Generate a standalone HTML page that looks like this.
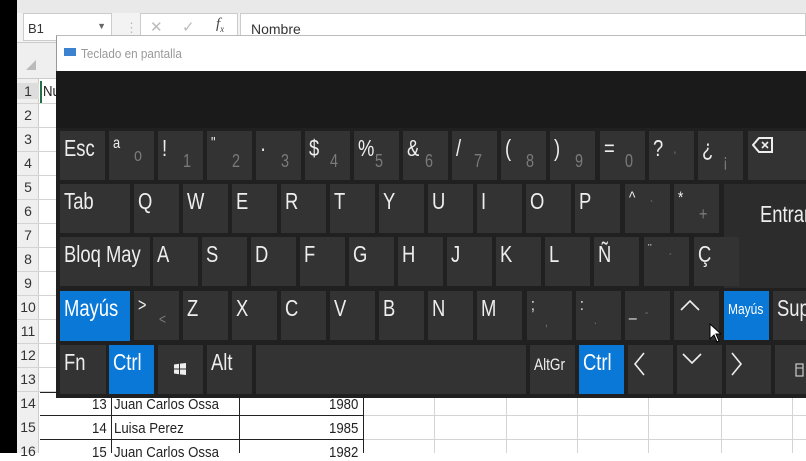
<!DOCTYPE html>
<html><head><meta charset="utf-8"><style>
*{margin:0;padding:0;box-sizing:border-box}
body{width:806px;height:453px;overflow:hidden;position:relative;background:#fff;font-family:"Liberation Sans",sans-serif}
.a{position:absolute}
.k{position:absolute;background:#333;color:#eee;height:49px;width:45px;overflow:hidden}
.b{background:#0a78d7;color:#fff}
.l{position:absolute;left:4px;top:4px;font-size:23px;transform:scaleX(.8);transform-origin:left top;white-space:nowrap}
.s{position:absolute;left:25px;top:20px;font-size:18px;color:#7a7a7a;transform:scaleX(.8);transform-origin:left top}
.rn{position:absolute;left:17px;width:22px;font-size:14px;color:#333;text-align:center}
.hl{position:absolute;height:1px;background:#d4d4d4}
.vl{position:absolute;width:1px;background:#d4d4d4}
.c{position:absolute;font-size:15px;color:#222;transform:scaleX(.88);transform-origin:left top;white-space:nowrap}
</style></head><body>
<div class="a" style="left:0;top:0;width:17px;height:453px;background:#000"></div>
<div class="a" style="left:17px;top:0;width:789px;height:13px;background:#e9e9e9"></div>
<div class="a" style="left:17px;top:13px;width:789px;height:30px;background:#f3f3f3;border-bottom:1px solid #ccc"></div>
<div class="a" style="left:23px;top:13px;width:89px;height:28px;background:#fff;border:1px solid #ccc;font-size:13px;color:#333;padding:7px 4px">B1<span style="position:absolute;right:5px;top:7px;font-size:9px;color:#666">▼</span></div>
<div class="a" style="left:125px;top:20px;color:#bbb;font-size:13px">⋮</div>
<div class="a" style="left:140px;top:13px;width:98px;height:28px;background:#fff;border:1px solid #ccc"></div>
<div class="a" style="left:150px;top:18px;color:#bbb;font-size:15px">✕</div>
<div class="a" style="left:182px;top:18px;color:#bbb;font-size:15px">✓</div>
<div class="a" style="left:216px;top:16px;color:#444;font-size:15px;font-style:italic;font-family:'Liberation Serif',serif">f<sub style="font-size:9px">x</sub></div>
<div class="a" style="left:240px;top:13px;width:566px;height:28px;background:#fff;border:1px solid #ccc;font-size:14px;color:#333;padding:7px 10px">Nombre</div>
<div class="a" style="left:17px;top:43px;width:22px;height:410px;background:#efefef;border-right:1px solid #ccc"></div>
<div class="a" style="left:17px;top:43px;width:789px;height:36px;background:#efefef;border-bottom:1px solid #ccc"></div>
<div class="a" style="left:26px;top:60px;width:0;height:0;border-left:10px solid transparent;border-bottom:10px solid #bbb"></div>
<div class="rn" style="top:83px;background:#ddd">1</div>
<div class="rn" style="top:107px">2</div><div class="rn" style="top:131px">3</div><div class="rn" style="top:155px">4</div><div class="rn" style="top:179px">5</div><div class="rn" style="top:203px">6</div><div class="rn" style="top:227px">7</div><div class="rn" style="top:251px">8</div><div class="rn" style="top:275px">9</div><div class="rn" style="top:299px">10</div><div class="rn" style="top:323px">11</div><div class="rn" style="top:347px">12</div><div class="rn" style="top:371px">13</div><div class="rn" style="top:395px">14</div><div class="rn" style="top:419px">15</div><div class="rn" style="top:443px">16</div>
<div class="hl" style="left:17px;top:103px;width:40px"></div><div class="hl" style="left:17px;top:127px;width:40px"></div><div class="hl" style="left:17px;top:151px;width:40px"></div><div class="hl" style="left:17px;top:175px;width:40px"></div><div class="hl" style="left:17px;top:199px;width:40px"></div><div class="hl" style="left:17px;top:223px;width:40px"></div><div class="hl" style="left:17px;top:247px;width:40px"></div><div class="hl" style="left:17px;top:271px;width:40px"></div><div class="hl" style="left:17px;top:295px;width:40px"></div><div class="hl" style="left:17px;top:319px;width:40px"></div><div class="hl" style="left:17px;top:343px;width:40px"></div><div class="hl" style="left:17px;top:367px;width:40px"></div><div class="hl" style="left:17px;top:391px;width:40px"></div>
<div class="a" style="left:40px;top:81px;width:2px;height:22px;background:#217346"></div>
<div class="c" style="left:43px;top:83px">Nu</div>
<div class="hl" style="left:363px;top:415px;width:443px"></div><div class="hl" style="left:363px;top:439px;width:443px"></div>
<div class="vl" style="left:434px;top:397px;height:56px"></div><div class="vl" style="left:506px;top:397px;height:56px"></div><div class="vl" style="left:577px;top:397px;height:56px"></div><div class="vl" style="left:648px;top:397px;height:56px"></div><div class="vl" style="left:721px;top:397px;height:56px"></div><div class="vl" style="left:792px;top:397px;height:56px"></div>
<div class="a" style="left:40px;top:392px;width:323px;height:1px;background:#222"></div>
<div class="a" style="left:40px;top:415px;width:323px;height:1px;background:#222"></div>
<div class="a" style="left:40px;top:439px;width:323px;height:1px;background:#222"></div>
<div class="a" style="left:111px;top:392px;width:1px;height:61px;background:#222"></div>
<div class="a" style="left:239px;top:392px;width:1px;height:61px;background:#222"></div>
<div class="a" style="left:363px;top:392px;width:1px;height:61px;background:#222"></div>
<div class="c" style="left:92px;top:396px">13</div><div class="c" style="left:114px;top:396px">Juan Carlos Ossa</div><div class="c" style="left:329px;top:396px">1980</div>
<div class="c" style="left:92px;top:420px">14</div><div class="c" style="left:114px;top:420px">Luisa Perez</div><div class="c" style="left:329px;top:420px">1985</div>
<div class="c" style="left:92px;top:444px">15</div><div class="c" style="left:114px;top:444px">Juan Carlos Ossa</div><div class="c" style="left:329px;top:444px">1982</div>
<div class="a" style="left:56px;top:35px;width:750px;height:36px;background:#fff;border-left:1px solid #999;border-top:1px solid #bbb"></div>
<div class="a" style="left:64px;top:48px;width:12px;height:8px;background:#3b82d0"></div>
<div class="a" style="left:81px;top:46px;font-size:13px;color:#999;transform:scaleX(.9);transform-origin:left top">Teclado en pantalla</div>
<div class="a" style="left:56px;top:71px;width:750px;height:59px;background:#1a1a1a"></div>
<div class="a" style="left:56px;top:128px;width:750px;height:270px;background:#202020"></div>
<div class="k" style="left:60px;top:131px"><span class="l">Esc</span></div>
<div class="k" style="left:109px;top:131px"><span class="l" style="font-size:16px">a</span><span class="s" style="top:14px">o</span></div>
<div class="k" style="left:158px;top:131px"><span class="l">!</span><span class="s">1</span></div>
<div class="k" style="left:207px;top:131px"><span class="l" style="font-size:16px">"</span><span class="s">2</span></div>
<div class="k" style="left:256px;top:131px"><span class="l">·</span><span class="s">3</span></div>
<div class="k" style="left:305px;top:131px"><span class="l">$</span><span class="s">4</span></div>
<div class="k" style="left:354px;top:131px"><span class="l">%</span><span class="s" style="left:21px">5</span></div>
<div class="k" style="left:403px;top:131px"><span class="l">&amp;</span><span class="s" style="left:22px">6</span></div>
<div class="k" style="left:452px;top:131px"><span class="l">/</span><span class="s" style="left:22px">7</span></div>
<div class="k" style="left:501px;top:131px"><span class="l">(</span><span class="s">8</span></div>
<div class="k" style="left:550px;top:131px"><span class="l">)</span><span class="s">9</span></div>
<div class="k" style="left:600px;top:131px"><span class="l">=</span><span class="s">0</span></div>
<div class="k" style="left:649px;top:131px"><span class="l">?</span><span class="s" style="font-size:12px;top:18px">'</span></div>
<div class="k" style="left:698px;top:131px"><span class="l">¿</span><span class="s">¡</span></div>
<div class="k" style="left:748px;top:131px;width:58px"><svg class="a" style="left:4px;top:6px" width="22" height="16" viewBox="0 0 22 16"><path d="M7 1H20V15H7L1 8Z" fill="none" stroke="#eee" stroke-width="2"/><path d="M10 5L16 11M16 5L10 11" stroke="#eee" stroke-width="1.6"/></svg></div>
<div class="k" style="left:60px;top:184px;width:70px"><span class="l">Tab</span></div>
<div class="k" style="left:134px;top:184px"><span class="l">Q</span></div>
<div class="k" style="left:183px;top:184px"><span class="l">W</span></div>
<div class="k" style="left:232px;top:184px"><span class="l">E</span></div>
<div class="k" style="left:281px;top:184px"><span class="l">R</span></div>
<div class="k" style="left:330px;top:184px"><span class="l">T</span></div>
<div class="k" style="left:379px;top:184px"><span class="l">Y</span></div>
<div class="k" style="left:428px;top:184px"><span class="l">U</span></div>
<div class="k" style="left:477px;top:184px"><span class="l">I</span></div>
<div class="k" style="left:526px;top:184px"><span class="l">O</span></div>
<div class="k" style="left:575px;top:184px"><span class="l">P</span></div>
<div class="k" style="left:625px;top:184px"><span class="l" style="font-size:17px">^</span><span class="s" style="font-size:12px;top:14px">`</span></div>
<div class="k" style="left:674px;top:184px"><span class="l" style="font-size:17px">*</span><span class="s">+</span></div>
<div class="k" style="left:724px;top:184px;width:82px;height:104px;background:#2c2c2c"><span class="l" style="left:36px;top:17px">Entrar</span></div>
<div class="k" style="left:60px;top:237px;width:90px"><span class="l">Bloq May</span></div>
<div class="k" style="left:153px;top:237px"><span class="l">A</span></div>
<div class="k" style="left:202px;top:237px"><span class="l">S</span></div>
<div class="k" style="left:251px;top:237px"><span class="l">D</span></div>
<div class="k" style="left:300px;top:237px"><span class="l">F</span></div>
<div class="k" style="left:349px;top:237px"><span class="l">G</span></div>
<div class="k" style="left:398px;top:237px"><span class="l">H</span></div>
<div class="k" style="left:447px;top:237px"><span class="l">J</span></div>
<div class="k" style="left:496px;top:237px"><span class="l">K</span></div>
<div class="k" style="left:545px;top:237px"><span class="l">L</span></div>
<div class="k" style="left:594px;top:237px"><span class="l">Ñ</span></div>
<div class="k" style="left:644px;top:237px"><span class="l" style="font-size:14px">¨</span><span class="s" style="font-size:12px;top:14px">´</span></div>
<div class="k" style="left:694px;top:237px"><span class="l">Ç</span></div>
<div class="k b" style="left:60px;top:291px;width:70px;height:50px"><span class="l">Mayús</span></div>
<div class="k" style="left:134px;top:291px"><span class="l" style="font-size:18px">&gt;</span><span class="s" style="font-size:15px">&lt;</span></div>
<div class="k" style="left:183px;top:291px"><span class="l">Z</span></div>
<div class="k" style="left:232px;top:291px"><span class="l">X</span></div>
<div class="k" style="left:281px;top:291px"><span class="l">C</span></div>
<div class="k" style="left:330px;top:291px"><span class="l">V</span></div>
<div class="k" style="left:379px;top:291px"><span class="l">B</span></div>
<div class="k" style="left:428px;top:291px"><span class="l">N</span></div>
<div class="k" style="left:477px;top:291px"><span class="l">M</span></div>
<div class="k" style="left:527px;top:291px"><span class="l" style="font-size:17px">;</span><span class="s" style="font-size:12px;left:18px;top:24px">,</span></div>
<div class="k" style="left:576px;top:291px"><span class="l" style="font-size:17px">:</span><span class="s" style="font-size:12px;left:18px;top:22px">.</span></div>
<div class="k" style="left:625px;top:291px"><span class="l" style="font-size:17px;top:10px">_</span><span class="s" style="font-size:12px;left:20px;top:14px">-</span></div>
<div class="k" style="left:674px;top:291px"><svg class="a" style="left:5px;top:7px" width="22" height="14"><path d="M2 12L11 3L20 12" fill="none" stroke="#eee" stroke-width="1.6"/></svg></div>
<div class="k b" style="left:724px;top:291px"><span class="l" style="font-size:15px;top:10px">Mayús</span></div>
<div class="k" style="left:773px;top:291px;width:33px"><span class="l">Sup</span></div>
<div class="k" style="left:60px;top:345px;width:46px"><span class="l">Fn</span></div>
<div class="k b" style="left:109px;top:345px"><span class="l">Ctrl</span></div>
<div class="k" style="left:158px;top:345px"><svg class="a" style="left:16px;top:18px" width="12" height="12"><path d="M0 1.5L5 .8V5.5H0ZM6 .6L12 0V5.5H6ZM0 6.5H5V11.2L0 10.5ZM6 6.5H12V12L6 11.4Z" fill="#eee"/></svg></div>
<div class="k" style="left:207px;top:345px"><span class="l">Alt</span></div>
<div class="k" style="left:256px;top:345px;width:270px"></div>
<div class="k" style="left:530px;top:345px"><span class="l" style="font-size:17px;top:10px">AltGr</span></div>
<div class="k b" style="left:579px;top:345px"><span class="l">Ctrl</span></div>
<div class="k" style="left:628px;top:345px"><svg class="a" style="left:4px;top:6px" width="14" height="26"><path d="M12 2L3 13L12 24" fill="none" stroke="#eee" stroke-width="1.6"/></svg></div>
<div class="k" style="left:677px;top:345px"><svg class="a" style="left:4px;top:7px" width="22" height="14"><path d="M2 2L11 11L20 2" fill="none" stroke="#eee" stroke-width="1.6"/></svg></div>
<div class="k" style="left:726px;top:345px"><svg class="a" style="left:4px;top:6px" width="14" height="26"><path d="M2 2L11 13L2 24" fill="none" stroke="#eee" stroke-width="1.6"/></svg></div>
<div class="k" style="left:775px;top:345px;width:31px"><svg class="a" style="left:20px;top:18px" width="9" height="14"><rect x="1" y="1" width="7" height="12" fill="none" stroke="#ccc" stroke-width="1.2"/><path d="M1 5H8" stroke="#ccc"/></svg></div>
<svg class="a" style="left:709px;top:323px" width="12" height="20"><path d="M1 1V16L5 12L8 19L10 18L7 11H12Z" fill="#fff" stroke="#000" stroke-width="1"/></svg>
</body></html>
